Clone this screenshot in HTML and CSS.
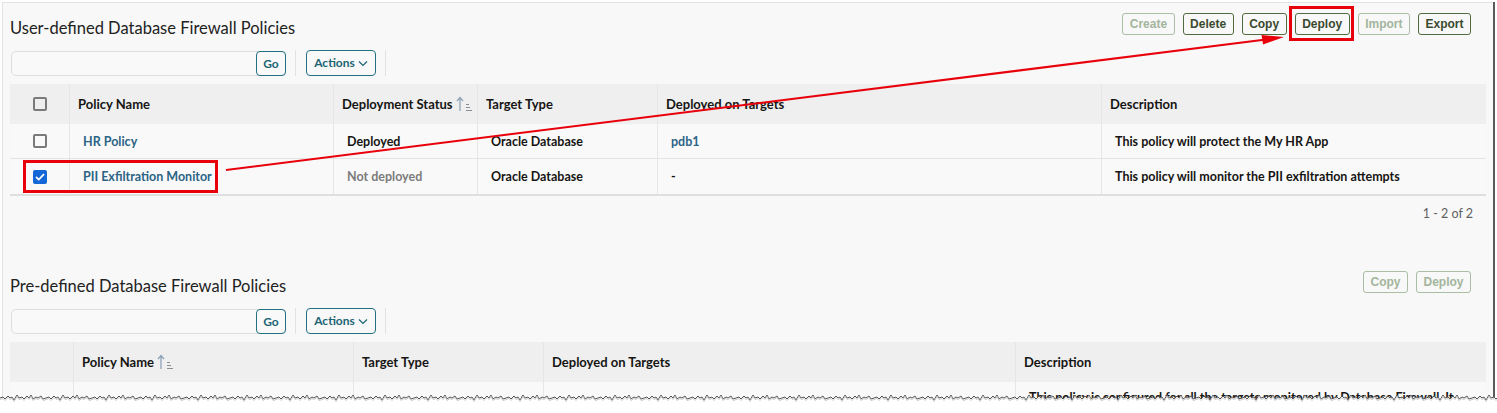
FILE: index.html
```html
<!DOCTYPE html>
<html>
<head>
<meta charset="utf-8">
<link rel="stylesheet" href="styles.css">
</head>
<body>
<div class="frame">
  <section class="sec sec1">
    <div class="sec-head">
      <h2 class="title">User-defined Database Firewall Policies</h2>
      <div class="btns">
        <span class="btn dis">Create</span>
        <span class="btn">Delete</span>
        <span class="btn">Copy</span>
        <span class="btn">Deploy</span>
        <span class="btn dis">Import</span>
        <span class="btn">Export</span>
      </div>
    </div>
    <div class="toolbar">
      <div class="search"><span class="go">Go</span></div>
      <span class="sep"></span>
      <span class="actions">Actions <svg width="10" height="7" viewBox="0 0 10 7"><path d="M1 1.5 L5 5.5 L9 1.5" fill="none" stroke="currentColor" stroke-width="1.2"/></svg></span>
      <span class="sep"></span>
    </div>
    <div class="table t1">
      <div class="row head">
        <div class="c c0"><span class="cb"></span></div>
        <div class="c c1">Policy Name</div>
        <div class="c c2">Deployment Status <svg class="sort" width="18" height="16" viewBox="0 0 18 16"><path d="M4 15 V1.8 M1 5 L4 1.5 L7 5" fill="none" stroke="#8fa3b8" stroke-width="1.3"/><path d="M10 8.5 H13 M10 11.5 H14 M10 14.5 H16" stroke="#8a8f96" stroke-width="1"/></svg></div>
        <div class="c c3">Target Type</div>
        <div class="c c4">Deployed on Targets</div>
        <div class="c c5">Description</div>
      </div>
      <div class="row">
        <div class="c c0"><span class="cb"></span></div>
        <div class="c c1"><span class="link">HR Policy</span></div>
        <div class="c c2 strong">Deployed</div>
        <div class="c c3 strong">Oracle Database</div>
        <div class="c c4"><span class="link">pdb1</span></div>
        <div class="c c5 strong">This policy will protect the My HR App</div>
      </div>
      <div class="row last">
        <div class="c c0"><span class="cb on"><svg width="10" height="8" viewBox="0 0 10 8"><path d="M1 4 L3.8 6.6 L9 1.2" fill="none" stroke="#fff" stroke-width="1.8"/></svg></span></div>
        <div class="c c1"><span class="link">PII Exfiltration Monitor</span></div>
        <div class="c c2 muted">Not deployed</div>
        <div class="c c3 strong">Oracle Database</div>
        <div class="c c4 strong">-</div>
        <div class="c c5 strong">This policy will monitor the PII exfiltration attempts</div>
      </div>
    </div>
    <div class="pager">1 - 2 of 2</div>
  </section>

  <section class="sec sec2">
    <div class="sec-head">
      <h2 class="title">Pre-defined Database Firewall Policies</h2>
      <div class="btns">
        <span class="btn dis">Copy</span>
        <span class="btn dis">Deploy</span>
      </div>
    </div>
    <div class="toolbar">
      <div class="search"><span class="go">Go</span></div>
      <span class="sep"></span>
      <span class="actions">Actions <svg width="10" height="7" viewBox="0 0 10 7"><path d="M1 1.5 L5 5.5 L9 1.5" fill="none" stroke="currentColor" stroke-width="1.2"/></svg></span>
      <span class="sep"></span>
    </div>
    <div class="table t2">
      <div class="row head">
        <div class="c c0"></div>
        <div class="c c1">Policy Name <svg class="sort" width="18" height="16" viewBox="0 0 18 16"><path d="M4 15 V1.8 M1 5 L4 1.5 L7 5" fill="none" stroke="#8fa3b8" stroke-width="1.3"/><path d="M10 8.5 H13 M10 11.5 H14 M10 14.5 H16" stroke="#8a8f96" stroke-width="1"/></svg></div>
        <div class="c c2">Target Type</div>
        <div class="c c3">Deployed on Targets</div>
        <div class="c c4">Description</div>
      </div>
      <div class="row">
        <div class="c c0"></div>
        <div class="c c1"></div>
        <div class="c c2"></div>
        <div class="c c3"></div>
        <div class="c c4 strong">This policy is configured for all the targets monitored by Database Firewall. It</div>
      </div>
    </div>
  </section>
</div>

<svg class="annot" width="1497" height="413" viewBox="0 0 1497 413">
  <rect x="1290.5" y="7.5" width="62" height="32" fill="none" stroke="#e8000b" stroke-width="3"/>
  <rect x="24.5" y="161.5" width="192" height="30" fill="none" stroke="#e8000b" stroke-width="3"/>
  <line x1="226" y1="170" x2="1266" y2="39.5" stroke="#e8000b" stroke-width="2"/>
  <path d="M1284 37 L1261.5 35 L1263 44.5 Z" fill="#e8000b"/>
</svg>

<svg class="tear" width="1497" height="24" viewBox="0 0 1497 24">
  <defs>
    <pattern id="tp" width="46" height="24" patternUnits="userSpaceOnUse">
      <path d="M0 9 L3 8 L5 10 L8 7 L10 9 L12 8 L14 11 L17 6 L19 9 L22 8 L24 10 L27 7 L29 9 L31 6 L33 10 L36 8 L38 9 L41 7 L43 10 L46 9 L46 24 L0 24 Z" fill="#fff"/>
      <path d="M0 9 L3 8 L5 10 L8 7 L10 9 L12 8 L14 11 L17 6 L19 9 L22 8 L24 10 L27 7 L29 9 L31 6 L33 10 L36 8 L38 9 L41 7 L43 10 L46 9" fill="none" stroke="#555" stroke-width="1"/>
      <path d="M0 10.5 L3 9.5 L5 11.5 L8 8.5 L10 10.5 L12 9.5 L14 12.5 L17 7.5 L19 10.5 L22 9.5 L24 11.5 L27 8.5 L29 10.5 L31 7.5 L33 11.5 L36 9.5 L38 10.5 L41 8.5 L43 11.5 L46 10.5" fill="none" stroke="#c8c8c8" stroke-width="1"/>
    </pattern>
  </defs>
  <rect x="0" y="0" width="1497" height="24" fill="url(#tp)"/>
</svg>
</body>
</html>
```
FILE: styles.css
```css
* { box-sizing: border-box; }
html, body { margin: 0; padding: 0; }
body {
  width: 1497px;
  height: 413px;
  background: #fff;
  position: relative;
  overflow: hidden;
  font-family: Lato, "Liberation Sans", sans-serif;
  color: #161513;
}
.frame {
  margin: 2px 0 0 2px;
  width: 1491px;
  height: 405px;
  background: #f8f8f8;
  border-top: 1px solid #e3e3e3;
  border-left: 1px solid #e3e3e3;
  box-shadow: 2px 0 0 #5a5a5a;
  padding: 0 7px 0 7px;
}
.sec-head {
  display: flex;
  justify-content: space-between;
  align-items: flex-start;
  height: 47px;
}
.title {
  margin: 14px 0 0 0;
  font-size: 16.5px;
  line-height: 22px;
  font-weight: 400;
  color: #222;
}
.btns {
  display: flex;
  gap: 8px;
  margin-top: 10px;
  margin-right: 15px;
}
.btn {
  height: 22px;
  padding: 0 6.5px;
  border: 1px solid #4f6b3f;
  border-radius: 3px;
  font-family: "Liberation Sans", Arial, sans-serif;
  font-weight: 700;
  font-size: 12px;
  line-height: 20px;
  color: #3b4a2f;
  background: #f8f8f8;
}
.btn.dis {
  border-color: #a9bea3;
  color: #a3b59d;
}
.toolbar {
  display: flex;
  align-items: center;
  height: 26px;
  padding-left: 1px;
}
.search {
  width: 275px;
  height: 25px;
  border: 1px solid #dedede;
  border-radius: 5px;
  background: #f9f9f9;
  display: flex;
  justify-content: flex-end;
}
.go {
  width: 30px;
  height: 25px;
  margin: -1px -1px 0 0;
  border: 1px solid #227082;
  border-radius: 4px;
  color: #1c6474;
  font-weight: 700;
  font-size: 12px;
  line-height: 23px;
  text-align: center;
}
.sep {
  width: 1px;
  height: 26px;
  background: #e2e2e2;
  margin: 0 10px 0 9px;
}
.actions {
  width: 70px;
  height: 26px;
  border: 1px solid #227082;
  border-radius: 4px;
  color: #1c6474;
  font-weight: 700;
  font-size: 12px;
  line-height: 24px;
  text-align: center;
  display: flex;
  align-items: center;
  justify-content: center;
  gap: 3px;
}
.table {
  margin-top: 8px;
  width: 1476px;
}
.row {
  display: flex;
  height: 35px;
  border-bottom: 1px solid #e4e4e4;
  background: #f9f9f9;
}
.row.head {
  height: 40px;
  background: #efefef;
  border-bottom: none;
}
.row.last {
  height: 37px;
  border-bottom: 2px solid #dfdfdf;
}
.c {
  display: flex;
  align-items: center;
  border-left: 1px solid #e6e6e6;
  padding-left: 13px;
  font-size: 12.5px;
  font-weight: 400;
  white-space: nowrap;
  overflow: hidden;
}
.row.head .c {
  padding-left: 8px;
  font-size: 13px;
  font-weight: 700;
  color: #161513;
}
.c0 { border-left: none; justify-content: center; padding-left: 0 !important; }
.t1 .c0 { width: 59px; }
.t1 .c1 { width: 264px; }
.t1 .c2 { width: 144px; }
.t1 .c3 { width: 180px; }
.t1 .c4 { width: 444px; }
.t1 .c5 { width: 385px; }
.t2 .c0 { width: 63px; }
.t2 .c1 { width: 280px; }
.t2 .c2 { width: 190px; }
.t2 .c3 { width: 472px; }
.t2 .c4 { width: 471px; }
.t2 .row:not(.head) { height: 24px; }
.t2 .row:not(.head) .c { align-items: flex-end; }
.cb {
  width: 14px;
  height: 14px;
  border: 2px solid #7a7a7a;
  border-radius: 2px;
  display: flex;
  align-items: center;
  justify-content: center;
}
.cb.on {
  background: #1467d6;
  border-color: #1467d6;
}
.link { color: #2b6486; font-weight: 700; }
.strong { font-weight: 700; }
.muted { color: #7c7c7c; font-weight: 700; }
.sort { margin-left: 3px; }
.pager {
  height: 40px;
  text-align: right;
  padding-right: 13px;
  padding-top: 10px;
  font-size: 12.5px;
  color: #5f5f5f;
}
.sec2 { margin-top: 25px; }
.annot {
  position: absolute;
  left: 0;
  top: 0;
  pointer-events: none;
}
.tear {
  position: absolute;
  left: 0;
  top: 389px;
}
```
